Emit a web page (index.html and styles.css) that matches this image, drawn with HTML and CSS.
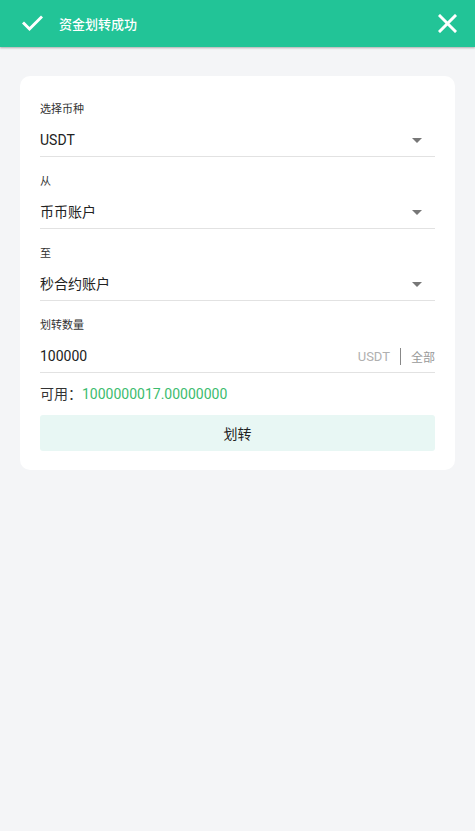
FILE: index.html
```html
<!DOCTYPE html>
<html lang="zh">
<head>
<meta charset="utf-8">
<title>划转</title>
<link rel="stylesheet" href="styles.css">
</head>
<body>
<header class="toast">
  <svg class="toast-check" width="21" height="17" viewBox="0 0 21 17"><path d="M2 8.5 L7.5 14 L19 2.5" fill="none" stroke="#fff" stroke-width="3" stroke-linecap="square"/></svg>
  <span class="toast-title">资金划转成功</span>
  <svg class="toast-close" width="19" height="19" viewBox="0 0 19 19"><path d="M2 2 L17 17 M17 2 L2 17" fill="none" stroke="#fff" stroke-width="3" stroke-linecap="square"/></svg>
</header>
<main class="card">
  <div class="field">
    <div class="label">选择币种</div>
    <div class="row"><span class="value">USDT</span><span class="caret"></span></div>
  </div>
  <div class="field">
    <div class="label">从</div>
    <div class="row"><span class="value">币币账户</span><span class="caret"></span></div>
  </div>
  <div class="field">
    <div class="label">至</div>
    <div class="row"><span class="value">秒合约账户</span><span class="caret"></span></div>
  </div>
  <div class="field">
    <div class="label">划转数量</div>
    <div class="row"><span class="value">100000</span><span class="unit">USDT</span><span class="sep"></span><span class="all">全部</span></div>
  </div>
  <div class="avail">可用：<span class="avail-num">1000000017.00000000</span></div>
  <div class="btn">划转</div>
</main>
</body>
</html>
```
FILE: styles.css
```css
html, body {
  margin: 0;
  padding: 0;
}
body {
  background: #f4f5f7;
  font-family: Roboto, "Noto Sans CJK SC", sans-serif;
  color: #333;
  min-height: 831px;
}
.toast {
  height: 47px;
  background: #22c497;
  display: flex;
  align-items: center;
  padding: 0 18px 0 22px;
  box-shadow: 0 1px 2px rgba(0,0,0,0.3);
}
.toast-check {
  display: block;
  margin-top: -1px;
}
.toast-title {
  color: #fff;
  font-size: 13px;
  font-weight: 500;
  margin-left: 16px;
  flex: 1;
}
.toast-close {
  display: block;
  margin-top: -1px;
}
.card {
  margin: 29px 20px 0;
  background: #fff;
  border-radius: 10px;
  padding: 26px 20px 19px;
  display: flex;
  flex-direction: column;
}
.field {
  display: flex;
  flex-direction: column;
}
.field + .field {
  margin-top: 17px;
}
.label {
  font-size: 11px;
  line-height: 16px;
  height: 16px;
  color: #333;
}
.row {
  margin-top: 6px;
  height: 33px;
  box-sizing: border-box;
  border-bottom: 1px solid #e2e2e2;
  display: flex;
  align-items: center;
}
.value {
  flex: 1;
  font-size: 14px;
  line-height: 20px;
  height: 20px;
  color: #222;
}
.caret {
  width: 0;
  height: 0;
  border-left: 5px solid transparent;
  border-right: 5px solid transparent;
  border-top: 5px solid #777;
  margin-right: 13px;
}
.unit {
  font-size: 13px;
  color: #b0b0b0;
}
.sep {
  width: 1px;
  height: 17px;
  background: #888;
  margin: 0 10px;
}
.all {
  font-size: 12px;
  color: #999;
}
.avail {
  margin-top: 11px;
  font-size: 14px;
  line-height: 20px;
  height: 20px;
  color: #333;
}
.avail-num {
  color: #3cbc6e;
}
.btn {
  margin-top: 11px;
  height: 36px;
  background: #e8f7f4;
  border-radius: 3px;
  display: flex;
  align-items: center;
  justify-content: center;
  font-size: 14px;
  color: #222;
}
```
